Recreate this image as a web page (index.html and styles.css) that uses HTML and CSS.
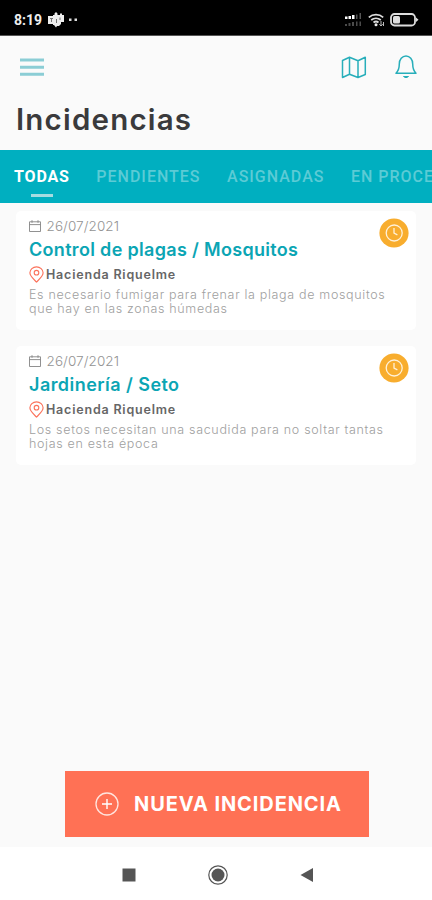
FILE: index.html
```html
<!DOCTYPE html>
<html lang="es">
<head>
<meta charset="utf-8">
<title>Incidencias</title>
<link rel="stylesheet" href="styles.css">
</head>
<body>
<svg width="0" height="0" class="defs">
  <symbol id="calendar" viewBox="0 0 12 12"><path d="M.5 1.8h11v9.7H.5zM.5 4.6h11M3 .2v2.6M9 .2v2.6" fill="none" stroke="#858585" stroke-width=".9"/></symbol>
  <symbol id="pin" viewBox="0 0 15 17"><path d="M7.5 16C4.500 13 .9 10.300 .9 6.800a6.600 6 0 0 1 13.200 0C14.100 10.300 10.500 13 7.500 16z" fill="none" stroke="#fb735c" stroke-width="1.150"/><circle cx="7.500" cy="6.700" r="2.300" fill="none" stroke="#fb735c" stroke-width="1.100"/></symbol>
  <symbol id="clock" viewBox="0 0 30 30"><circle cx="15" cy="15" r="14.600" fill="#f8ad2e"/><circle cx="15.200" cy="15" r="8" fill="none" stroke="#fff1d8" stroke-width="1.300"/><path d="M15 10v5.200l3.400 1.600" fill="none" stroke="#fff1d8" stroke-width="1.300"/></symbol>
</svg>
<div class="status">
  <span class="time">8:19</span>
  <svg class="teams" width="16" height="16" viewBox="0 0 16 16"><path fill="#eee" d="M0 4h5V3h1.500V1.500L8 0l1.500 1.500V3H12V1.500h2V3h2v7h-3v2l-2 2H9l-1 1.500L6 13H5v-1H0z"/><path d="M2 6.500h3M3.500 6.500V10M8.500 7v4M12 5.500V8" stroke="#777"/></svg>
  <svg width="10" height="4" viewBox="0 0 10 4"><path d="M1 .5h2.500V3H1zM6.500 .5H9V3H6.500z" fill="#ddd"/></svg>
  <span class="grow"></span>
  <svg class="signal" width="18" height="14" viewBox="0 0 18 14"><path d="M1 3.500h2.500V6H1zM4.500 3h2.500v3H4.500zM8 2h2.500v4H8z" fill="#fff"/><path d="M12 1.500h1.500V6H12zM15.500 0H17v6h-1.500z" fill="#555"/><path d="M1 11h2v2H1zM4.500 10h2v3h-2zM8 9h2v4H8zM12 8.500h1.500V13H12zM15.500 8.500H17V13h-1.500z" fill="#4b4b4b"/></svg>
  <svg class="wifi" width="17" height="14" viewBox="0 0 17 14"><path d="M.8 4.300a11 11 0 0 1 14.400 0M3.200 7a7.500 7.500 0 0 1 9.600 0M5.500 9.500a4 4 0 0 1 5 0" fill="none" stroke="#ddd" stroke-width="1.700"/><circle cx="8" cy="11.800" r="1.500" fill="#eee"/><path d="M13 8v5M11.300 11.200 13 13l1.700-1.800M15.500 13V9" fill="none" stroke="#bbb" stroke-width="1"/></svg>
  <svg width="29" height="14" viewBox="0 0 29 14"><rect x="1" y="1" width="24" height="11.500" rx="3.500" fill="none" stroke="#ddd" stroke-width="1.800"/><rect x="3" y="3" width="7" height="7.500" rx="1.500" fill="#ddd"/><path d="M26 4.500 28.500 6.800 26 9z" fill="#ddd"/></svg>
</div>
<header class="bar">
  <svg width="24" height="20" viewBox="0 0 24 20"><path d="M0 3h24M0 10.300h24M0 17.300h24" stroke="#8bcdd5" stroke-width="3"/></svg>
  <span class="grow"></span>
  <svg class="map" width="26" height="23" viewBox="0 0 26 23"><path d="M1.500 4.500 8.500 1.300l8.500 3.400L24.300 1.300v17.200L17 21.500l-8.500-3.300L1.500 21.500zM8.500 1.300v16.900M17 4.700v16.800" fill="none" stroke="#27aeba" stroke-width="1.500" stroke-linejoin="round"/></svg>
  <svg width="22" height="24" viewBox="0 0 22 24"><path d="M1 18.200h20c-2-2-3.300-4.200-3.300-9.200C17.700 4.300 14.800 1 11 1S4.300 4.300 4.300 9c0 5-1.300 7.200-3.300 9.200z" fill="none" stroke="#27aeba" stroke-width="1.500" stroke-linejoin="round"/><path d="M8.500 21.500q2.500 2.500 5 0z" fill="#27aeba" stroke="#27aeba"/></svg>
</header>
<h1>Incidencias</h1>
<nav class="tabs">
  <span class="tab active">TODAS</span><span class="tab">PENDIENTES</span><span class="tab">ASIGNADAS</span><span class="tab">EN PROCESO</span>
</nav>
<main>
  <article class="card">
    <div class="date"><svg width="12" height="12"><use href="#calendar"/></svg><span>26/07/2021</span></div>
    <h2>Control de plagas / Mosquitos</h2>
    <div class="place"><svg width="15" height="17"><use href="#pin"/></svg><span>Hacienda Riquelme</span></div>
    <p>Es necesario fumigar para frenar la plaga de mosquitos<br>que hay en las zonas húmedas</p>
    <svg class="badge" width="30" height="30"><use href="#clock"/></svg>
  </article>
  <article class="card">
    <div class="date"><svg width="12" height="12"><use href="#calendar"/></svg><span>26/07/2021</span></div>
    <h2 class="short">Jardinería / Seto</h2>
    <div class="place"><svg width="15" height="17"><use href="#pin"/></svg><span>Hacienda Riquelme</span></div>
    <p>Los setos necesitan una sacudida para no soltar tantas<br>hojas en esta época</p>
    <svg class="badge" width="30" height="30"><use href="#clock"/></svg>
  </article>
</main>
<button class="new"><svg width="24" height="24" viewBox="0 0 24 24"><path d="M12 7v10M7 12h10" stroke="#fff" stroke-width="1.400"/><circle cx="12" cy="12" r="11" fill="none" stroke="#ffe5df" stroke-width="1.300"/></svg><span>NUEVA INCIDENCIA</span></button>
<footer class="sysnav">
  <svg width="14" height="14" viewBox="0 0 14 14"><path d="M.5 .5h13v13H.5z" fill="#555"/></svg>
  <svg width="20" height="20" viewBox="0 0 20 20"><circle cx="10" cy="10" r="9.200" fill="none" stroke="#555" stroke-width="1.200"/><circle cx="10" cy="10" r="6.500" fill="#555"/></svg>
  <svg width="14" height="14" viewBox="0 0 14 14"><path d="M13 0v14L.5 7z" fill="#555"/></svg>
</footer>
</body>
</html>
```
FILE: styles.css
```css
* { box-sizing: border-box; }
body { margin: 0; width: 432px; height: 900px; overflow: hidden; background: #fafafa; font-family: Inter, "Noto Sans", sans-serif; display: flex; flex-direction: column; }
svg { display: block; flex: none; }
.defs { position: absolute; }
.grow { flex: 1; }
.status { flex: none; height: 36px; background: #000; border-bottom: 1px solid #555; display: flex; align-items: center; padding: 4px 13px 0 14px; color: #eee; font: 700 14px/16px Roboto, sans-serif; }
.time { width: 34px; }
.teams { margin-right: 4px; }
.signal { margin-right: 6px; }
.wifi { margin-right: 5px; }
.bar { flex: none; height: 62px; display: flex; align-items: center; padding: 0 15px 0 20px; }
.map { margin-right: 28px; }
h1 { flex: none; margin: 0; height: 52px; padding-left: 16px; font-size: 29.500px; line-height: 42px; font-weight: 600; letter-spacing: 1.2px; color: #3a3a3c; white-space: nowrap; }
.tabs { flex: none; height: 53px; background: #00afc0; display: flex; gap: 26.500px; padding-left: 14px; font: 500 16px/54px Roboto, sans-serif; letter-spacing: 1px; white-space: nowrap; overflow: hidden; color: #5ccbd5; }
.tab { flex: none; }
.active { color: #fff; position: relative; font-weight: 700; letter-spacing: .85px; }
.active::after { content: ""; position: absolute; left: 17px; top: 44px; width: 22px; height: 3px; background: #a5dce1; }
main { flex: none; display: flex; flex-direction: column; gap: 16px; padding: 8px 16px 0; }
.card { position: relative; height: 119px; background: #fff; border-radius: 5px; padding: 7px 13px 0; white-space: nowrap; }
.date { display: flex; align-items: center; gap: 5.500px; height: 16px; font-size: 13.500px; font-weight: 300; color: #939393; letter-spacing: .1px; }
h2 { margin: 4px 0 0; font-size: 18px; line-height: 24px; font-weight: 600; color: #0ba5b4; letter-spacing: .32px; }
.short { letter-spacing: .45px; }
.place { display: flex; align-items: center; gap: 2px; height: 17px; margin-top: 4px; font-size: 12.500px; font-weight: 600; color: #666; letter-spacing: .8px; }
p { margin: 5px 0 0; font-size: 12.500px; line-height: 14px; font-weight: 300; color: #a0a0a0; letter-spacing: .67px; }
.badge { position: absolute; top: 7px; right: 7px; }
.new { flex: none; width: 304px; height: 66px; margin: 306px 0 0 65px; padding: 0 0 0 30px; border: 0; background: #ff7155; color: #fff; display: flex; align-items: center; gap: 15px; font: 700 20px/24px Inter, sans-serif; letter-spacing: .9px; white-space: nowrap; }
.sysnav { flex: none; height: 53px; margin-top: 10px; background: #fff; display: flex; align-items: center; justify-content: center; gap: 72px; padding: 2px 0 0 3px; }
```
